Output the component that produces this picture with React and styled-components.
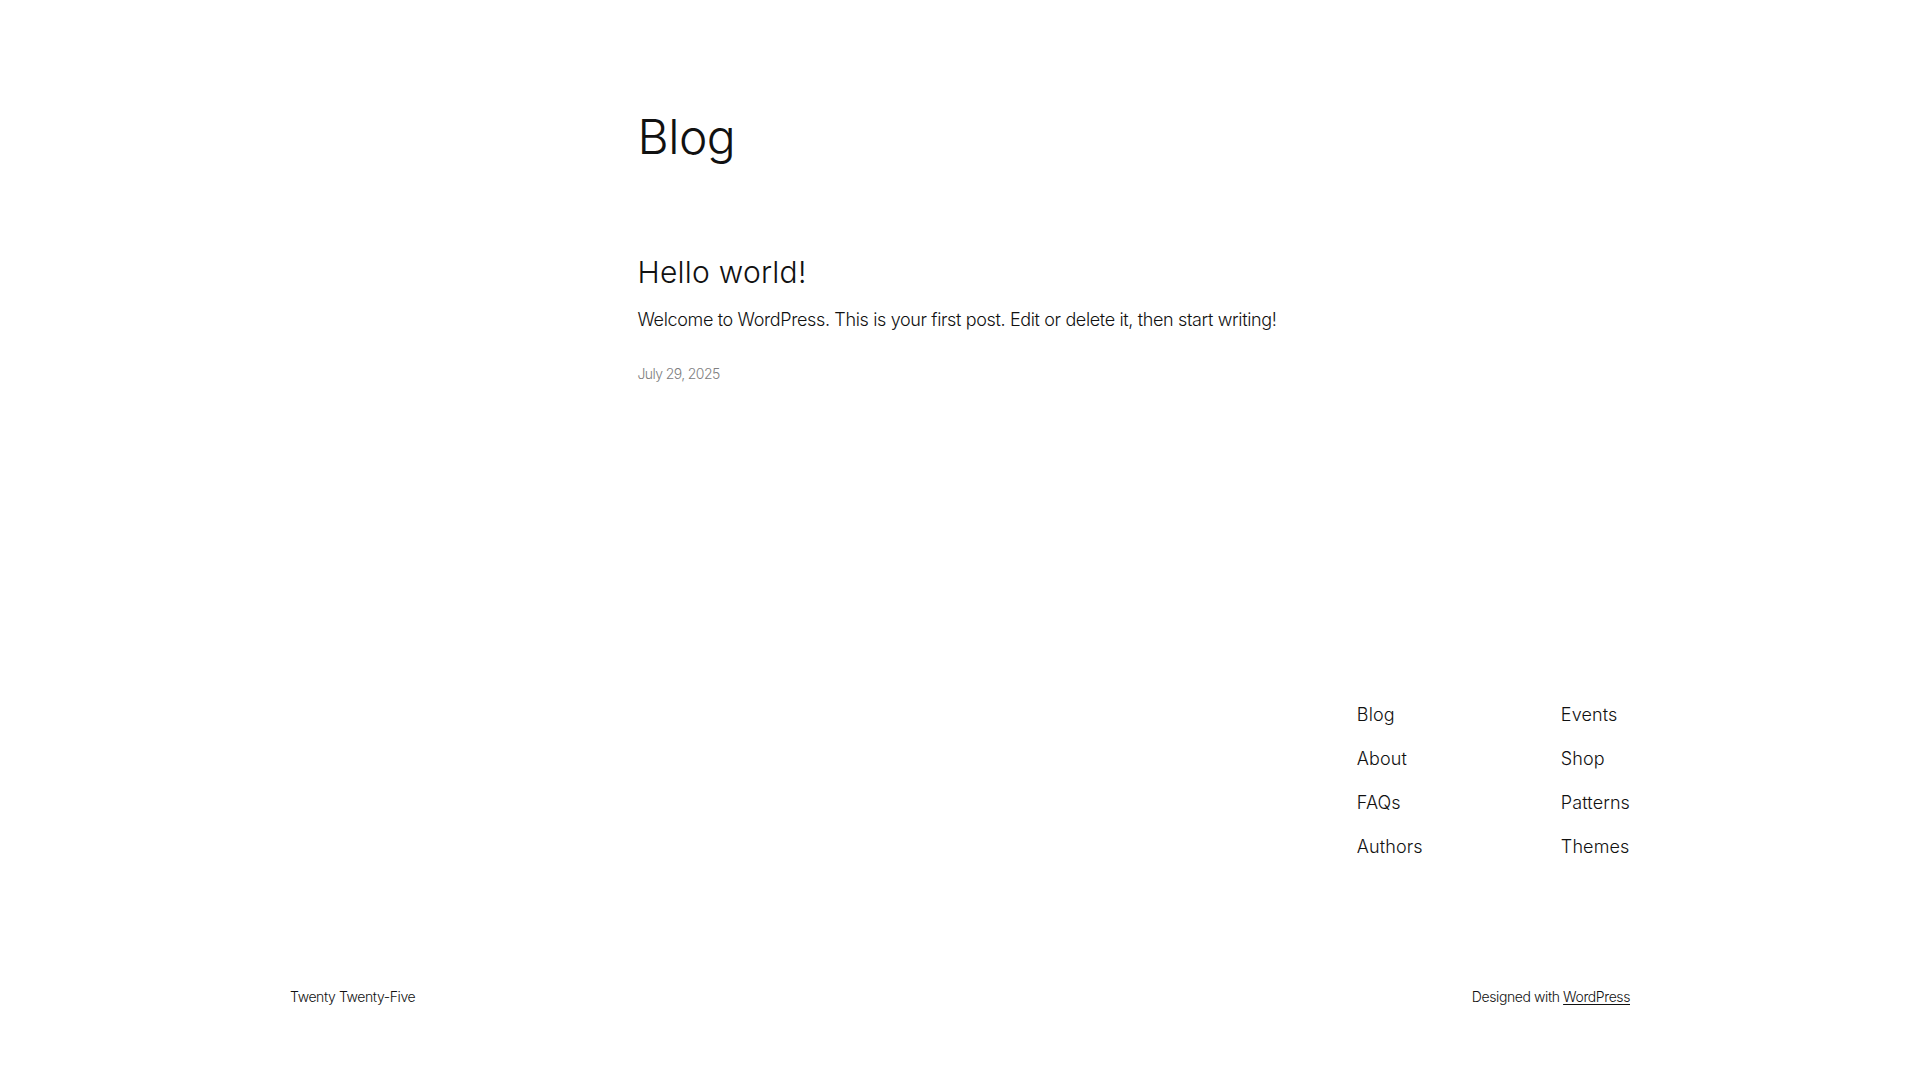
import React from "react";
import styled, { createGlobalStyle } from "styled-components";

const GlobalStyle = createGlobalStyle`
  html, body {
    margin: 0;
    padding: 0;
    background: #ffffff;
  }
  body {
    font-family: Inter, "Noto Sans", sans-serif;
    font-weight: 300;
    color: #111111;
    -webkit-font-smoothing: antialiased;
  }
`;

const Page = styled.div`
  min-height: 100vh;
  display: flex;
  flex-direction: column;
`;

const Main = styled.main`
  width: 645px;
  margin: 0 auto;
  padding-top: 108px;
  padding-bottom: 317px;
`;

const PageTitle = styled.h1`
  margin: 0;
  font-size: 48px;
  font-weight: 300;
  line-height: 1.2;
  letter-spacing: -0.5px;
`;

const Post = styled.article`
  margin-top: 88px;
  display: flex;
  flex-direction: column;
`;

const PostTitle = styled.h2`
  margin: 0;
  font-size: 30px;
  font-weight: 300;
  line-height: 1.2;
  letter-spacing: 0.25px;
`;

const Excerpt = styled.p`
  margin: 16px 0 0;
  font-size: 18px;
  line-height: 1.6;
  letter-spacing: -0.36px;
  white-space: nowrap;
`;

const PostDate = styled.time`
  margin-top: 29px;
  font-size: 14px;
  line-height: 1.5;
  letter-spacing: -0.6px;
  color: #808080;
`;

const Footer = styled.footer`
  width: 1340px;
  margin: 0 auto;
  display: flex;
  flex-direction: column;
  gap: 125px;
  padding-bottom: 72px;
`;

const NavRow = styled.div`
  display: flex;
  justify-content: flex-end;
`;

const NavColumn = styled.nav`
  display: flex;
  flex-direction: column;
  gap: 15px;
  min-width: ${(p) => p.$width || "auto"};
`;

const NavLink = styled.a`
  font-size: 18px;
  line-height: 1.6;
  letter-spacing: 0.1px;
  color: #111111;
  text-decoration: none;
`;

const BottomRow = styled.div`
  display: flex;
  justify-content: space-between;
  align-items: baseline;
  font-size: 14px;
  line-height: 1.4;
  letter-spacing: -0.4px;
`;

const Credit = styled.p`
  margin: 0;
`;

const CreditLink = styled.a`
  color: #111111;
  text-decoration: underline;
  text-underline-offset: 2px;
  text-decoration-thickness: 1px;
`;

const columns = [
  { width: "204px", links: ["Blog", "About", "FAQs", "Authors"] },
  { width: "auto", links: ["Events", "Shop", "Patterns", "Themes"] },
];

export default function App() {
  return (
    <Page>
      <GlobalStyle />
      <Main>
        <PageTitle>Blog</PageTitle>
        <Post>
          <PostTitle>Hello world!</PostTitle>
          <Excerpt>
            Welcome to WordPress. This is your first post. Edit or delete it,
            then start writing!
          </Excerpt>
          <PostDate>July 29, 2025</PostDate>
        </Post>
      </Main>
      <Footer>
        <NavRow>
          {columns.map((col, i) => (
            <NavColumn key={i} $width={col.width}>
              {col.links.map((l) => (
                <NavLink key={l} href="#">
                  {l}
                </NavLink>
              ))}
            </NavColumn>
          ))}
        </NavRow>
        <BottomRow>
          <Credit>Twenty Twenty-Five</Credit>
          <Credit>
            Designed with <CreditLink href="#">WordPress</CreditLink>
          </Credit>
        </BottomRow>
      </Footer>
    </Page>
  );
}
